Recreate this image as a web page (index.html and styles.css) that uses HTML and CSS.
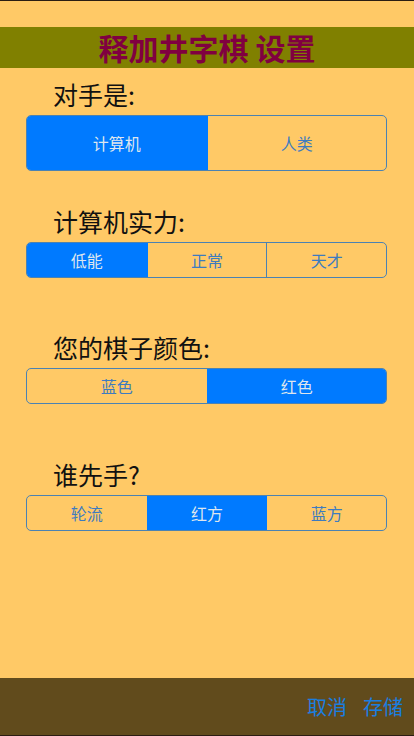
FILE: index.html
```html
<!DOCTYPE html>
<html lang="zh-CN">
<head>
<meta charset="utf-8">
<title>释加井字棋 设置</title>
<link rel="stylesheet" href="styles.css">
</head>
<body>
<div class="screen">
  <div class="top-line"></div>
  <div class="status-space"></div>
  <header class="title-bar">
    <h1 class="title">释加井字棋 设置</h1>
  </header>
  <main class="content">
    <section class="group group-1">
      <div class="label">对手是:</div>
      <div class="seg seg-2 seg-tall">
        <div class="seg-item selected">计算机</div>
        <div class="seg-item">人类</div>
      </div>
    </section>
    <section class="group group-2">
      <div class="label">计算机实力:</div>
      <div class="seg seg-3">
        <div class="seg-item selected">低能</div>
        <div class="seg-item">正常</div>
        <div class="seg-item">天才</div>
      </div>
    </section>
    <section class="group group-3">
      <div class="label">您的棋子颜色:</div>
      <div class="seg seg-2">
        <div class="seg-item">蓝色</div>
        <div class="seg-item selected">红色</div>
      </div>
    </section>
    <section class="group group-4">
      <div class="label">谁先手?</div>
      <div class="seg seg-3">
        <div class="seg-item">轮流</div>
        <div class="seg-item selected">红方</div>
        <div class="seg-item">蓝方</div>
      </div>
    </section>
  </main>
  <footer class="toolbar">
    <span class="tool-btn">取消</span>
    <span class="tool-btn">存储</span>
  </footer>
  <div class="bottom-line"></div>
</div>
</body>
</html>
```
FILE: styles.css
```css
* { box-sizing: border-box; }
html, body {
  margin: 0;
  padding: 0;
  background: #ffc966;
}
body {
  font-family: "Noto Sans CJK SC", "Noto Sans", sans-serif;
}
.screen {
  width: 414px;
  height: 736px;
  display: flex;
  flex-direction: column;
  background: #ffc966;
  overflow: hidden;
}
.top-line {
  height: 1px;
  background: #2b1d12;
}
.status-space {
  height: 26px;
}
.title-bar {
  height: 41px;
  background: #808000;
  display: flex;
  align-items: center;
  justify-content: center;
}
.title {
  margin: 0;
  font-size: 30px;
  line-height: 41px;
  font-weight: 700;
  color: #800040;
  letter-spacing: 0;
}
.content {
  flex: 1;
  padding: 0 27px 0 26px;
}
.group-1 { margin-top: 11px; }
.group-2 { margin-top: 35px; }
.group-3 { margin-top: 54px; }
.group-4 { margin-top: 55px; }
.label {
  height: 30px;
  line-height: 30px;
  padding-left: 27px;
  font-size: 25px;
  color: #111;
  margin-bottom: 6px;
}
.seg {
  display: grid;
  height: 36px;
  border: 1.5px solid #4b82b2;
  border-radius: 5px;
  overflow: hidden;
}
.seg-tall { height: 56px; }
.seg-2 { grid-template-columns: 1fr 1fr; }
.seg-3 { grid-template-columns: 1fr 1fr 1fr; }
.seg-item {
  display: flex;
  align-items: center;
  justify-content: center;
  font-size: 16px;
  color: #3d7bc0;
  border-left: 1.5px solid #4b82b2;
}
.seg-item:first-child { border-left: none; }
.seg-item.selected {
  background: #007aff;
  color: #dfe6ee;
  border-left-color: #007aff;
}
.seg-item.selected + .seg-item { border-left-color: #007aff; }
.toolbar {
  height: 57px;
  background: #614b1c;
  display: flex;
  align-items: center;
  justify-content: flex-end;
  gap: 16px;
  padding-right: 11px;
}
.tool-btn {
  font-size: 20px;
  color: #1a7ee0;
}
.bottom-line {
  height: 1px;
  background: #2b1d12;
}
```
